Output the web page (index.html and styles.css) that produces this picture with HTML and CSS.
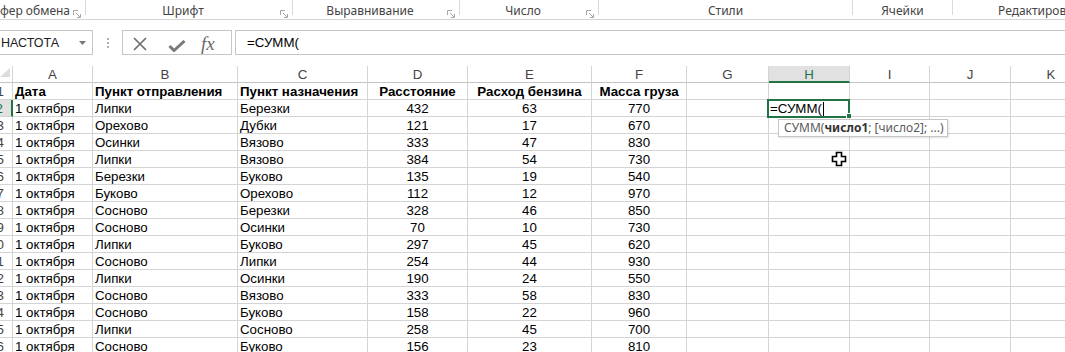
FILE: index.html
```html
<!DOCTYPE html>
<html lang="ru">
<head>
    <meta charset="UTF-8">
    <meta name="viewport" content="width=device-width, initial-scale=1.0">
    <title>Книга1 - Excel</title>
    <link rel="stylesheet" href="styles.css">
</head>
<body>
    <div class="ribbon">
        <div class="grp g1"><span class="lbl">фер обмена</span><svg class="launch" width="8" height="8" viewBox="0 0 8 8"><path d="M0.5 5V0.5H5M3 3l4 4M7.5 4v3.5H4" fill="none" stroke="#a6a6a6"/></svg></div>
        <div class="sep"></div>
        <div class="grp g2"><span class="lbl">Шрифт</span><svg class="launch" width="8" height="8" viewBox="0 0 8 8"><path d="M0.5 5V0.5H5M3 3l4 4M7.5 4v3.5H4" fill="none" stroke="#a6a6a6"/></svg></div>
        <div class="sep"></div>
        <div class="grp g3"><span class="lbl">Выравнивание</span><svg class="launch" width="8" height="8" viewBox="0 0 8 8"><path d="M0.5 5V0.5H5M3 3l4 4M7.5 4v3.5H4" fill="none" stroke="#a6a6a6"/></svg></div>
        <div class="sep"></div>
        <div class="grp g4"><span class="lbl">Число</span><svg class="launch" width="8" height="8" viewBox="0 0 8 8"><path d="M0.5 5V0.5H5M3 3l4 4M7.5 4v3.5H4" fill="none" stroke="#a6a6a6"/></svg></div>
        <div class="sep"></div>
        <div class="grp g5"><span class="lbl">Стили</span></div>
        <div class="sep"></div>
        <div class="grp g6"><span class="lbl">Ячейки</span></div>
        <div class="sep"></div>
        <div class="grp g7"><span class="lbl">Редактирование</span></div>
    </div>

    <div class="fbar">
        <div class="namebox">
            <span>НАСТОТА</span>
            <svg width="7" height="4" viewBox="0 0 7 4"><path d="M0 0h7L3.5 4z" fill="#777"/></svg>
        </div>
        <div class="dots">
            <svg width="2" height="10" viewBox="0 0 2 10"><rect x="0" y="0" width="2" height="2" fill="#b0b0b0"/><rect x="0" y="4" width="2" height="2" fill="#b0b0b0"/><rect x="0" y="8" width="2" height="2" fill="#b0b0b0"/></svg>
        </div>
        <div class="fbtns">
            <svg class="ico-x" width="14" height="14" viewBox="0 0 14 14"><path d="M1 1l12 12M13 1L1 13" stroke="#6e6e6e" stroke-width="1.7" fill="none"/></svg>
            <svg class="ico-ok" width="18" height="12" viewBox="0 0 18 12"><path d="M1.5 6l4.5 4.5L16.5 1" stroke="#7a7a7a" stroke-width="3" fill="none"/></svg>
            <span class="ico-fx">fx</span>
        </div>
        <div class="finput">=СУММ(</div>
    </div>

    <div class="sheet">
        <div class="row head"><div class="corner"><svg width="12" height="16" viewBox="0 0 12 16"><path d="M0 11h10V2z" fill="#dcdcdc"/></svg></div><div>A</div><div>B</div><div>C</div><div>D</div><div>E</div><div>F</div><div>G</div><div class="sel">H</div><div>I</div><div>J</div><div>K</div></div>
        <div class="row bold"><div class="rh">1</div><div>Дата</div><div>Пункт отправления</div><div>Пункт назначения</div><div class="n">Расстояние</div><div class="n">Расход бензина</div><div class="n">Масса груза</div><div></div><div></div><div></div><div></div><div></div></div>
        <div class="row"><div class="rh on">2</div><div>1 октября</div><div>Липки</div><div>Березки</div><div class="n">432</div><div class="n">63</div><div class="n">770</div><div></div><div class="act"><div class="edit">=СУММ(<span class="caret"></span><span class="handle"></span></div><div class="tip">СУММ(<b>число1</b>; [число2]; ...)</div></div><div></div><div></div><div></div></div>
        <div class="row"><div class="rh">3</div><div>1 октября</div><div>Орехово</div><div>Дубки</div><div class="n">121</div><div class="n">17</div><div class="n">670</div><div></div><div></div><div></div><div></div><div></div></div>
        <div class="row"><div class="rh">4</div><div>1 октября</div><div>Осинки</div><div>Вязово</div><div class="n">333</div><div class="n">47</div><div class="n">830</div><div></div><div></div><div></div><div></div><div></div></div>
        <div class="row"><div class="rh">5</div><div>1 октября</div><div>Липки</div><div>Вязово</div><div class="n">384</div><div class="n">54</div><div class="n">730</div><div></div><div></div><div></div><div></div><div></div></div>
        <div class="row"><div class="rh">6</div><div>1 октября</div><div>Березки</div><div>Буково</div><div class="n">135</div><div class="n">19</div><div class="n">540</div><div></div><div></div><div></div><div></div><div></div></div>
        <div class="row"><div class="rh">7</div><div>1 октября</div><div>Буково</div><div>Орехово</div><div class="n">112</div><div class="n">12</div><div class="n">970</div><div></div><div></div><div></div><div></div><div></div></div>
        <div class="row"><div class="rh">8</div><div>1 октября</div><div>Сосново</div><div>Березки</div><div class="n">328</div><div class="n">46</div><div class="n">850</div><div></div><div></div><div></div><div></div><div></div></div>
        <div class="row"><div class="rh">9</div><div>1 октября</div><div>Сосново</div><div>Осинки</div><div class="n">70</div><div class="n">10</div><div class="n">730</div><div></div><div></div><div></div><div></div><div></div></div>
        <div class="row"><div class="rh">10</div><div>1 октября</div><div>Липки</div><div>Буково</div><div class="n">297</div><div class="n">45</div><div class="n">620</div><div></div><div></div><div></div><div></div><div></div></div>
        <div class="row"><div class="rh">11</div><div>1 октября</div><div>Сосново</div><div>Липки</div><div class="n">254</div><div class="n">44</div><div class="n">930</div><div></div><div></div><div></div><div></div><div></div></div>
        <div class="row"><div class="rh">12</div><div>1 октября</div><div>Липки</div><div>Осинки</div><div class="n">190</div><div class="n">24</div><div class="n">550</div><div></div><div></div><div></div><div></div><div></div></div>
        <div class="row"><div class="rh">13</div><div>1 октября</div><div>Сосново</div><div>Вязово</div><div class="n">333</div><div class="n">58</div><div class="n">830</div><div></div><div></div><div></div><div></div><div></div></div>
        <div class="row"><div class="rh">14</div><div>1 октября</div><div>Сосново</div><div>Буково</div><div class="n">158</div><div class="n">22</div><div class="n">960</div><div></div><div></div><div></div><div></div><div></div></div>
        <div class="row"><div class="rh">15</div><div>1 октября</div><div>Липки</div><div>Сосново</div><div class="n">258</div><div class="n">45</div><div class="n">700</div><div></div><div></div><div></div><div></div><div></div></div>
        <div class="row"><div class="rh">16</div><div>1 октября</div><div>Сосново</div><div>Буково</div><div class="n">156</div><div class="n">23</div><div class="n">810</div><div></div><div></div><div></div><div></div><div></div></div>
    </div>

    <svg class="pointer" width="17" height="17" viewBox="0 0 17 17"><path d="M5.5 1.5h5v4h4v5h-4v4h-5v-4h-4v-5h4z" fill="#fff" stroke="#000" stroke-width="1.6"/></svg>
</body>
</html>
```

FILE: styles.css
```css
body {
    margin: 0;
    width: 1065px;
    height: 352px;
    overflow: hidden;
    position: relative;
    background-color: #fff;
    font-family: "Liberation Sans", Arial, sans-serif;
}

/* ribbon group captions */
.ribbon {
    display: flex;
    height: 20px;
    box-sizing: border-box;
    border-bottom: 1px solid #d5d5d5;
    font-family: "Noto Sans", sans-serif;
    font-size: 12px;
    color: #444;
    white-space: nowrap;
}
.grp {
    display: flex;
    align-items: flex-start;
    flex-shrink: 0;
}
.lbl {
    flex: 1;
    text-align: center;
    line-height: 16px;
    padding-top: 3px;
}
.launch {
    flex-shrink: 0;
    margin: 10px 4px 0 0;
}
.sep {
    width: 1px;
    height: 15px;
    flex-shrink: 0;
    background-color: #dadada;
}
.g1 { width: 85px; }
.g1 .lbl { text-align: left; }
.g2 { width: 206px; }
.g3 { width: 166px; }
.g4 { width: 138px; }
.g5 { width: 253px; }
.g6 { width: 99px; }
.g7 { flex: 1; overflow: hidden; }
.g7 .lbl { text-align: left; padding-left: 45px; }

/* formula bar */
.fbar {
    display: flex;
    height: 25px;
    margin-top: 10px;
    font-size: 13.3px;
}
.namebox {
    width: 94px;
    margin-left: -1px;
    box-sizing: border-box;
    border: 1px solid #c6c6c6;
    padding: 0 6px 0 1px;
    display: flex;
    align-items: center;
    justify-content: space-between;
    font-size: 12.5px;
    color: #222;
}
.dots {
    width: 29px;
    display: flex;
    align-items: center;
    justify-content: center;
}
.fbtns {
    width: 110px;
    box-sizing: border-box;
    border: 1px solid #c6c6c6;
    display: flex;
    align-items: flex-start;
}
.ico-x { margin: 6px 0 0 10px; }
.ico-ok { margin: 9px 0 0 21px; }
.ico-fx {
    margin-left: 15px;
    padding-top: 1px;
    font-family: "Liberation Serif", serif;
    font-style: italic;
    font-size: 19px;
    line-height: 23px;
    color: #6a6a6a;
}
.finput {
    flex: 1;
    margin-left: 3px;
    border: 1px solid #c6c6c6;
    border-right: none;
    padding-left: 11px;
    display: flex;
    align-items: center;
    color: #000;
}

/* grid */
.sheet {
    margin-top: 11px;
    font-size: 13.3px;
    color: #000;
}
.row {
    display: grid;
    grid-template-columns: 13px 80px 145px 130px 100px 124px 95px 82px 81px 80px 81px 81px;
    height: 17px;
}
.row > div {
    box-sizing: border-box;
    border-right: 1px solid #d4d4d4;
    border-bottom: 1px solid #d4d4d4;
    padding: 1px 2px 0;
    line-height: 15px;
    white-space: nowrap;
    overflow: hidden;
}
.row > .n { text-align: center; }
.bold > div { font-weight: bold; }

.head > div {
    text-align: center;
    color: #444;
    border-bottom-color: #c4c4c4;
}
.head > .corner { padding: 0; }
.head > .sel {
    background-color: #e1e1e1;
    color: #217346;
    border-bottom: 2px solid #217346;
}

.row > .rh {
    display: flex;
    justify-content: flex-end;
    padding: 1px 8px 0 0;
    color: #444;
    font-weight: normal;
}
.row > .rh.on {
    background-color: #e1e1e1;
    color: #217346;
    border-right: 2px solid #217346;
}

/* cell being edited */
.row > .act {
    position: relative;
    overflow: visible;
}
.edit {
    position: absolute;
    left: -2px;
    top: -1px;
    width: 83px;
    height: 19px;
    box-sizing: border-box;
    border: 2px solid #217346;
    background-color: #fff;
    padding-left: 1px;
    line-height: 15px;
    z-index: 2;
}
.caret {
    display: inline-block;
    width: 1px;
    height: 14px;
    margin-left: 1px;
    vertical-align: -3px;
    background-color: #000;
}
.handle {
    position: absolute;
    left: 77px;
    top: 12px;
    width: 5px;
    height: 5px;
    box-sizing: border-box;
    border-left: 1px solid #fff;
    border-top: 1px solid #fff;
    background-color: #217346;
}
.tip {
    position: absolute;
    left: 9px;
    top: 19px;
    width: 170px;
    height: 18px;
    box-sizing: border-box;
    border: 1px solid #c6c6c6;
    background-color: #fff;
    box-shadow: 1px 1px 2px rgba(0,0,0,0.12);
    padding-left: 5px;
    font-family: "Noto Sans", sans-serif;
    font-size: 12px;
    line-height: 16px;
    color: #5a5a5a;
    z-index: 3;
}
.tip b { color: #333; }

.pointer {
    position: absolute;
    left: 831px;
    top: 151px;
}
```
